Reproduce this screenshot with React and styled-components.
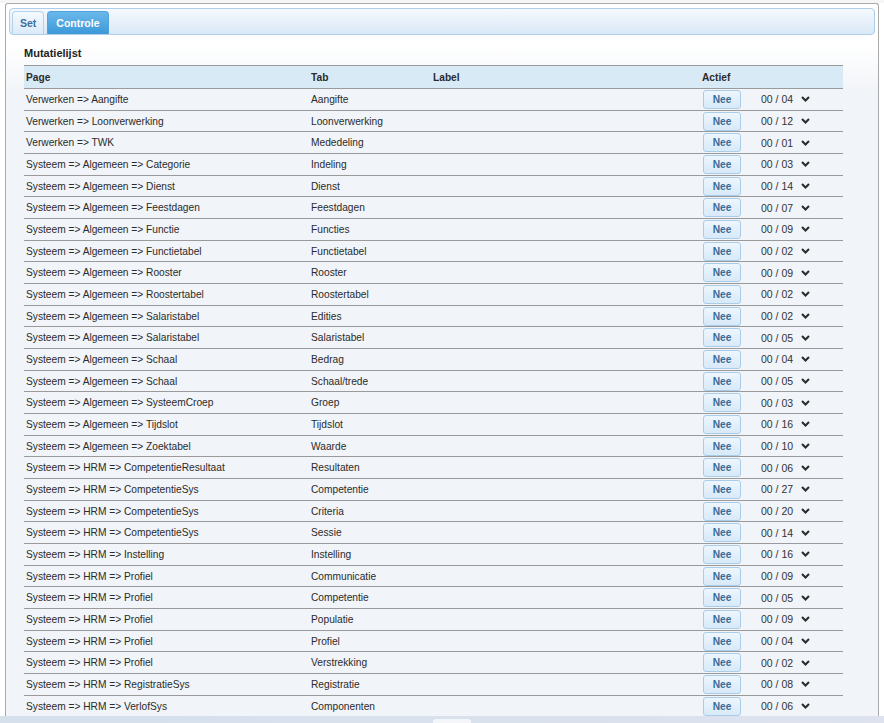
import React from "react";
import styled, { createGlobalStyle } from "styled-components";

const GlobalStyle = createGlobalStyle`
  html, body {
    margin: 0;
    padding: 0;
    background: #ffffff;
    font-family: "Liberation Sans", Arial, sans-serif;
  }
`;

const rows = [
  ["Verwerken => Aangifte", "Aangifte", "04"],
  ["Verwerken => Loonverwerking", "Loonverwerking", "12"],
  ["Verwerken => TWK", "Mededeling", "01"],
  ["Systeem => Algemeen => Categorie", "Indeling", "03"],
  ["Systeem => Algemeen => Dienst", "Dienst", "14"],
  ["Systeem => Algemeen => Feestdagen", "Feestdagen", "07"],
  ["Systeem => Algemeen => Functie", "Functies", "09"],
  ["Systeem => Algemeen => Functietabel", "Functietabel", "02"],
  ["Systeem => Algemeen => Rooster", "Rooster", "09"],
  ["Systeem => Algemeen => Roostertabel", "Roostertabel", "02"],
  ["Systeem => Algemeen => Salaristabel", "Edities", "02"],
  ["Systeem => Algemeen => Salaristabel", "Salaristabel", "05"],
  ["Systeem => Algemeen => Schaal", "Bedrag", "04"],
  ["Systeem => Algemeen => Schaal", "Schaal/trede", "05"],
  ["Systeem => Algemeen => SysteemCroep", "Groep", "03"],
  ["Systeem => Algemeen => Tijdslot", "Tijdslot", "16"],
  ["Systeem => Algemeen => Zoektabel", "Waarde", "10"],
  ["Systeem => HRM => CompetentieResultaat", "Resultaten", "06"],
  ["Systeem => HRM => CompetentieSys", "Competentie", "27"],
  ["Systeem => HRM => CompetentieSys", "Criteria", "20"],
  ["Systeem => HRM => CompetentieSys", "Sessie", "14"],
  ["Systeem => HRM => Instelling", "Instelling", "16"],
  ["Systeem => HRM => Profiel", "Communicatie", "09"],
  ["Systeem => HRM => Profiel", "Competentie", "05"],
  ["Systeem => HRM => Profiel", "Populatie", "09"],
  ["Systeem => HRM => Profiel", "Profiel", "04"],
  ["Systeem => HRM => Profiel", "Verstrekking", "02"],
  ["Systeem => HRM => RegistratieSys", "Registratie", "08"],
  ["Systeem => HRM => VerlofSys", "Componenten", "06"],
];

const Page = styled.div`
  height: 723px;
  overflow: hidden;
  display: flex;
  flex-direction: column;
  background: #ffffff;
`;

const TopStrip = styled.div`
  height: 3px;
  flex-shrink: 0;
  background: #f4f6f8;
`;

const Window = styled.div`
  height: 713px;
  flex-shrink: 0;
  margin: 0 5px 0 5px;
  border: 1px solid #a9a9a9;
  border-bottom: none;
  border-radius: 3px 3px 0 0;
  padding: 4px 3px 0 3px;
  box-sizing: border-box;
  overflow: hidden;
  background: linear-gradient(#ffffff 40px, #f1f4f8 90px);
`;

const TabBar = styled.div`
  height: 27px;
  box-sizing: border-box;
  border: 1px solid #aecde9;
  border-radius: 4px;
  background: linear-gradient(#f5f9fe, #dae9f7);
  display: flex;
  align-items: flex-end;
  gap: 3px;
  padding-left: 2px;
`;

const Tab = styled.div`
  height: 23px;
  box-sizing: border-box;
  padding: 0 ${(p) => (p.$active ? "8px" : "7px")};
  display: flex;
  align-items: center;
  font-size: 10.5px;
  font-weight: bold;
  border: 1px solid ${(p) => (p.$active ? "#4ea3dd" : "#b4d2ec")};
  border-bottom: none;
  border-radius: 4px 4px 0 0;
  color: ${(p) => (p.$active ? "#ffffff" : "#3e6f9c")};
  background: ${(p) =>
    p.$active
      ? "linear-gradient(#6ab8ea, #3d98d9)"
      : "linear-gradient(#f4f9fe, #dcebf8)"};
`;

const Content = styled.div`
  padding: 0 32px 0 15px;
`;

const Title = styled.h2`
  margin: 0;
  height: 30px;
  line-height: 36px;
  font-size: 11px;
  font-weight: bold;
  color: #222222;
`;

const Table = styled.div`
  display: grid;
  grid-template-columns: 285px 122px 269px 1fr;
  border-top: 1px solid #9a9a9a;
`;

const Row = styled.div`
  display: contents;
`;

const Cell = styled.div`
  height: ${(p) => (p.$head ? "22px" : "20.68px")};
  border-bottom: 1px solid #9a9a9a;
  background: ${(p) => (p.$head ? "#d9eaf7" : "#f1f4f8")};
  display: flex;
  align-items: center;
  padding-left: 2px;
  font-size: 10.2px;
  font-weight: ${(p) => (p.$head ? "bold" : "normal")};
  color: #2b2b2b;
  white-space: nowrap;
  overflow: hidden;
`;

const NeeButton = styled.button`
  width: 38px;
  height: 19px;
  margin-left: 1px;
  padding: 0;
  border: 1px solid #a9cce8;
  border-radius: 3px;
  background: linear-gradient(#eef6fd, #d8e9f8);
  font-family: "Liberation Sans", Arial, sans-serif;
  font-size: 10.2px;
  font-weight: bold;
  color: #3b6b97;
`;

const Count = styled.span`
  margin-left: 20px;
  font-size: 10.5px;
  color: #333333;
`;

const Chevron = styled.svg`
  margin-left: 8px;
  width: 9px;
  height: 6px;
`;

const Footer = styled.div`
  flex: 1;
  background: linear-gradient(90deg, #d5e0ec, #dde2ee);
  display: flex;
  justify-content: center;
  padding-top: 3px;
`;

const FooterTab = styled.div`
  width: 38px;
  margin-left: 20px;
  background: #f4f6fa;
  border-radius: 3px 3px 0 0;
`;

export default function App() {
  return (
    <Page>
      <GlobalStyle />
      <TopStrip />
      <Window>
        <TabBar>
          <Tab>Set</Tab>
          <Tab $active>Controle</Tab>
        </TabBar>
        <Content>
          <Title>Mutatielijst</Title>
          <Table>
            <Row>
              <Cell $head>Page</Cell>
              <Cell $head>Tab</Cell>
              <Cell $head>Label</Cell>
              <Cell $head>Actief</Cell>
            </Row>
            {rows.map(([page, tab, n], i) => (
              <Row key={i}>
                <Cell>{page}</Cell>
                <Cell>{tab}</Cell>
                <Cell />
                <Cell>
                  <NeeButton>Nee</NeeButton>
                  <Count>00 / {n}</Count>
                  <Chevron viewBox="0 0 9 6">
                    <path d="M1 1 L4.5 4.5 L8 1" fill="none" stroke="#2b2b2b" strokeWidth="2" />
                  </Chevron>
                </Cell>
              </Row>
            ))}
          </Table>
        </Content>
      </Window>
      <Footer>
        <FooterTab />
      </Footer>
    </Page>
  );
}
